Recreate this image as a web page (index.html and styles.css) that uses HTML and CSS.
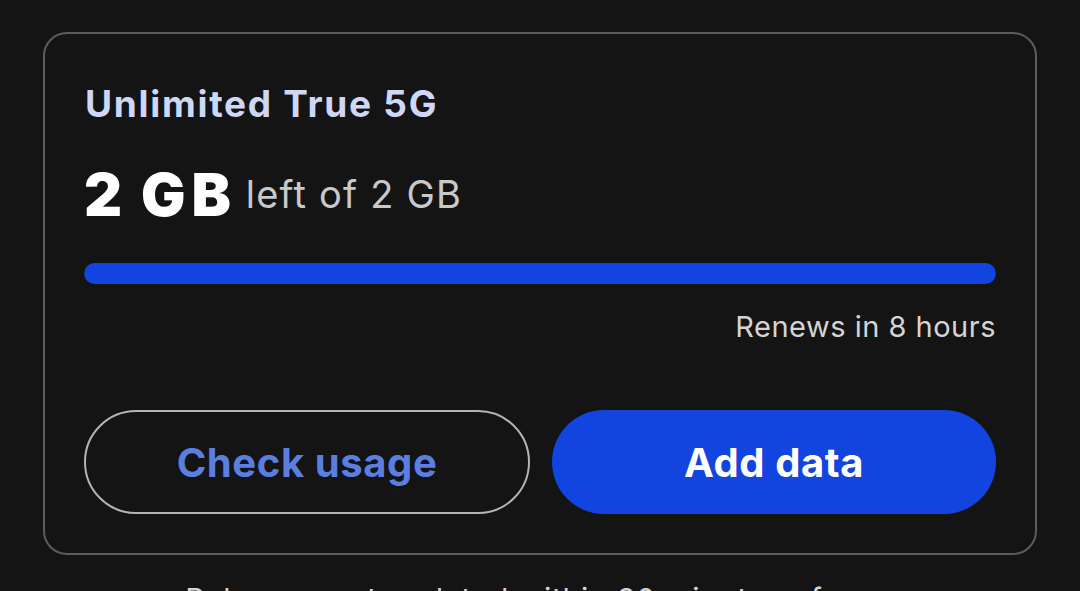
FILE: index.html
```html
<!DOCTYPE html>
<html lang="en">
<head>
<meta charset="utf-8">
<title>Plan</title>
<link rel="stylesheet" href="styles.css">
</head>
<body>
<main class="page">
  <section class="card">
    <h2 class="plan-title">Unlimited True 5G</h2>
    <div class="balance">
      <span class="amount">2 GB</span>
      <span class="total">left of 2 GB</span>
    </div>
    <div class="bar"><div class="bar-fill" style="width:100%"></div></div>
    <p class="renews">Renews in 8 hours</p>
    <div class="actions">
      <button class="btn btn-outline">Check usage</button>
      <button class="btn btn-solid">Add data</button>
    </div>
  </section>
  <p class="note">Balances get updated within 30 minutes of use.</p>
</main>
</body>
</html>
```
FILE: styles.css
```css
* { box-sizing: border-box; }
html, body { margin: 0; padding: 0; background: #141414; }
body {
  font-family: Inter, "Noto Sans", "Liberation Sans", sans-serif;
  color: #fff;
  width: 1080px;
  height: 591px;
  overflow: hidden;
}
.page {
  padding: 32px 43px 0 43px;
}
.card {
  border: 2px solid #5c5c5c;
  border-radius: 24px;
  padding: 48px 39px 39px 39px;
}
.plan-title {
  margin: 0 0 0 1px;
  font-size: 37px;
  line-height: 44px;
  font-weight: 700;
  letter-spacing: 1.7px;
  color: #cfd7f6;
}
.balance {
  margin-top: 37px;
  display: flex;
  align-items: flex-end;
  height: 64px;
}
.amount {
  font-size: 59px;
  line-height: 64px;
  font-weight: 900;
  letter-spacing: 6px;
  word-spacing: -5px;
  color: #ffffff;
}
.total {
  margin-left: 9px;
  font-size: 38px;
  line-height: 44px;
  padding-bottom: 11px;
  font-weight: 400;
  letter-spacing: 1.2px;
  color: #c9c9c9;
}
.bar {
  margin-top: 36px;
  height: 21px;
  border-radius: 11px;
  background: #2a2a2a;
  overflow: hidden;
}
.bar-fill {
  height: 100%;
  background: #1244e0;
  border-radius: 11px;
}
.renews {
  margin: 26px 0 0 0;
  text-align: right;
  font-size: 29px;
  line-height: 34px;
  letter-spacing: 0.5px;
  color: #d4d4d4;
}
.actions {
  margin-top: 66px;
  display: flex;
  gap: 22px;
}
.btn {
  flex-basis: 0;
  height: 104px;
  border-radius: 52px;
  font-family: inherit;
  font-size: 40px;
  font-weight: 700;
  letter-spacing: 0.6px;
  cursor: pointer;
}
.btn-outline {
  flex-grow: 444;
  background: transparent;
  border: 2px solid #b4b4b4;
  color: #5b7fe0;
}
.btn-solid {
  flex-grow: 446;
  background: #1244e0;
  border: none;
  color: #ffffff;
}
.note {
  margin: 27px 0 0 0;
  text-align: center;
  font-size: 30px;
  line-height: 34px;
  letter-spacing: 0.8px;
  color: #d4d4d4;
}
```
